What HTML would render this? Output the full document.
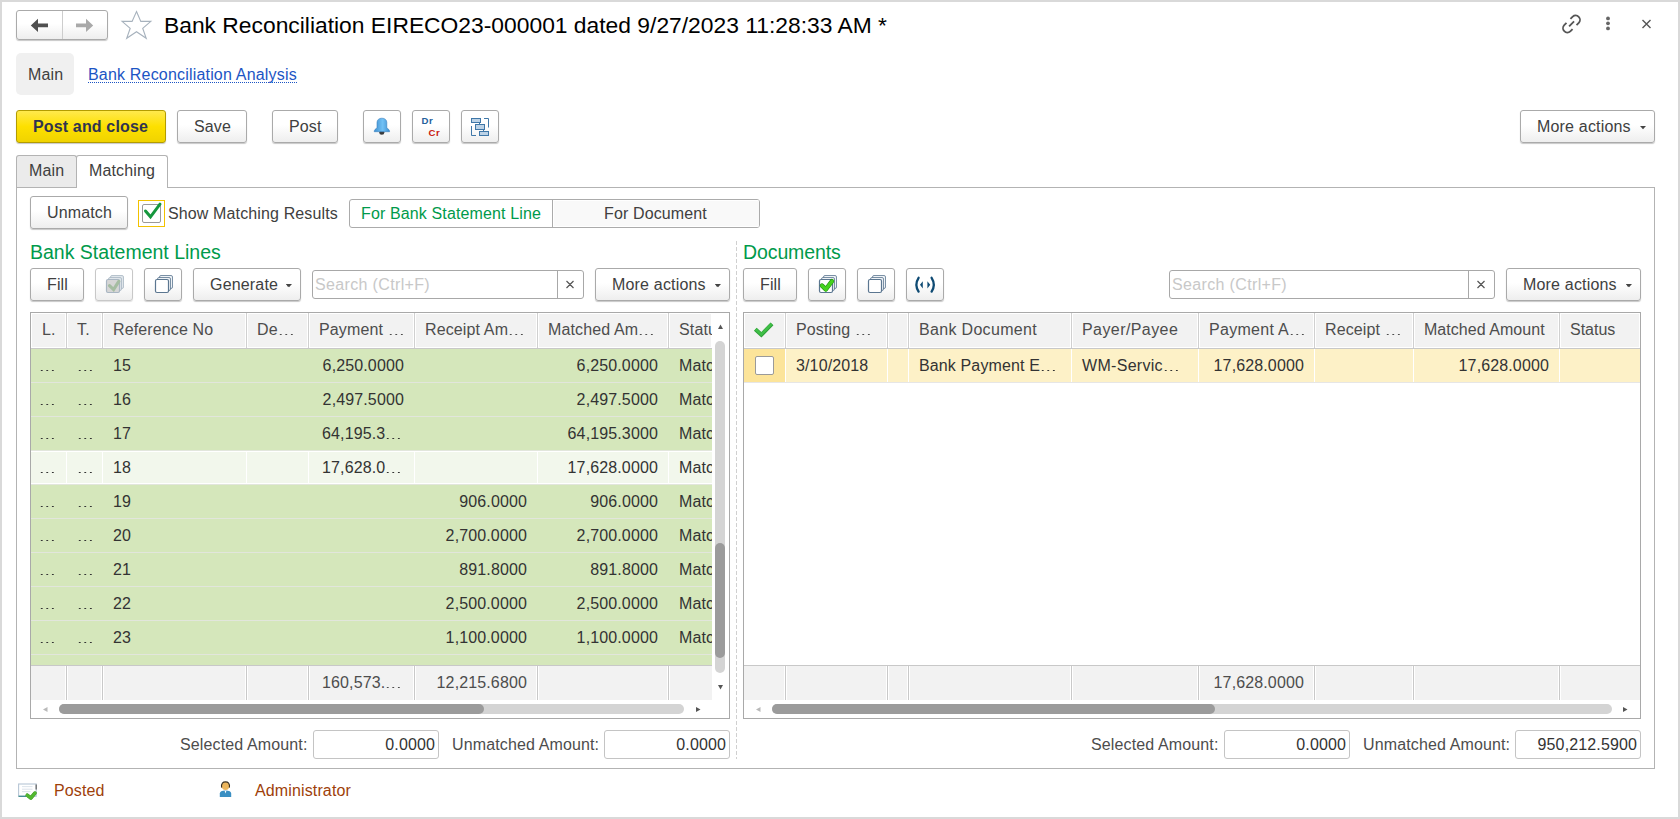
<!DOCTYPE html>
<html><head><meta charset="utf-8"><style>
*{box-sizing:border-box;margin:0;padding:0}
html,body{width:1680px;height:819px;overflow:hidden}
body{background:#d9d9d9;font-family:"Liberation Sans",sans-serif;font-size:16px;color:#404040;position:relative}
.win{position:absolute;left:2px;top:2px;width:1676px;height:815px;background:#fff}
.a{position:absolute}
.t{position:absolute;white-space:nowrap;line-height:1;letter-spacing:0.13px}
.el{display:inline-block;width:16px;height:1.4px;background:linear-gradient(90deg,currentColor 0,currentColor 2px,transparent 2px) 1.8px 0/5.55px 1.4px repeat-x}
.btn{position:absolute;border:1px solid #aaa;border-radius:3px;background:linear-gradient(#fff 0%,#fff 45%,#eeeeee 100%);box-shadow:0 1px 1px rgba(0,0,0,.22)}
.inp{position:absolute;border:1px solid #bdbdbd;border-radius:3px;background:#fff}
.tbl{position:absolute;border:1px solid #a8a8a8;background:#fff;overflow:hidden}
.hd{position:absolute;background:#f2f2f2;border:1px solid #fff}
.vl{position:absolute;width:1px;background:#cfcfcf}
</style></head><body>
<div class="win"></div>
<div class="btn" style="left:16px;top:10px;width:92px;height:30px;"></div>
<div class="a" style="left:62px;top:11px;width:1px;height:28px;background:#cdcdcd"></div>
<div class="t" style="left:164px;top:14px;font-size:22.83px;color:#000;letter-spacing:0">Bank Reconciliation EIRECO23-000001 dated 9/27/2023 11:28:33 AM *</div>
<div class="a" style="left:16px;top:53px;width:58px;height:42px;background:#f0f0f0;border-radius:5px"></div>
<div class="t" style="left:28px;top:67px;color:#404040;">Main</div>
<div class="t" style="left:88px;top:67px;color:#1c55c4;letter-spacing:0.185px">Bank Reconciliation Analysis</div>
<div class="a" style="left:88px;top:82px;width:209px;height:1px;background-image:linear-gradient(90deg,#1c55c4 50%,transparent 50%);background-size:2px 1px"></div>
<div class="btn" style="left:16px;top:110px;width:150px;height:33px;background:linear-gradient(#ffe94d,#fde000 50%,#f0d300);border-color:#b39c00"></div>
<div class="t" style="left:33px;top:119px;color:#30344f;font-weight:bold;letter-spacing:0.15px">Post and close</div>
<div class="btn" style="left:177px;top:110px;width:70px;height:33px;"></div>
<div class="t" style="left:194px;top:119px;">Save</div>
<div class="btn" style="left:272px;top:110px;width:66px;height:33px;"></div>
<div class="t" style="left:289px;top:119px;">Post</div>
<div class="btn" style="left:363px;top:110px;width:38px;height:33px;"></div>
<div class="btn" style="left:412px;top:110px;width:38px;height:33px;"></div>
<div class="btn" style="left:461px;top:110px;width:38px;height:33px;"></div>
<div class="btn" style="left:1520px;top:110px;width:135px;height:33px;"></div>
<div class="t" style="left:1537px;top:119px;letter-spacing:0.18px">More actions</div>
<div class="a" style="left:16px;top:155px;width:61px;height:33px;background:#ebebeb;border:1px solid #b3b3b3;border-bottom:none;border-radius:3px 3px 0 0"></div>
<div class="t" style="left:29px;top:163px;">Main</div>
<div class="a" style="left:76px;top:155px;width:92px;height:33px;background:#fff;border:1px solid #b3b3b3;border-bottom:none;border-radius:3px 3px 0 0"></div>
<div class="t" style="left:89px;top:163px;">Matching</div>
<div class="a" style="left:16px;top:187px;width:1639px;height:582px;border:1px solid #b3b3b3;border-top:none"></div>
<div class="a" style="left:16px;top:187px;width:60px;height:1px;background:#b3b3b3"></div>
<div class="a" style="left:167px;top:187px;width:1488px;height:1px;background:#b3b3b3"></div>
<div class="btn" style="left:30px;top:196px;width:98px;height:33px;"></div>
<div class="t" style="left:47px;top:205px;">Unmatch</div>
<div class="a" style="left:138px;top:200px;width:27px;height:27px;border:1px solid #f2c200"></div>
<div class="a" style="left:142px;top:204px;width:19px;height:19px;border:1px solid #9a9a9a;border-radius:2px;background:#fff"></div>
<div class="t" style="left:168px;top:206px;">Show Matching Results</div>
<div class="a" style="left:349px;top:199px;width:411px;height:29px;border:1px solid #ababab;border-radius:3px;background:#fff;overflow:hidden"><div style="position:absolute;left:202px;top:0;width:208px;height:27px;background:#f9f9f9;border-left:1px solid #ababab;box-shadow:inset 0 0 0 1px #fff"></div></div>
<div class="t" style="left:361px;top:206px;color:#009a4b;">For Bank Statement Line</div>
<div class="t" style="left:604px;top:206px;">For Document</div>
<div class="t" style="left:30px;top:243px;font-size:19.5px;color:#009a4b;letter-spacing:0">Bank Statement Lines</div>
<div class="t" style="left:743px;top:243px;font-size:19.5px;color:#009a4b;letter-spacing:-0.1px">Documents</div>
<div class="a" style="left:736px;top:241px;width:1px;height:518px;background-image:linear-gradient(#d0d0d0 0,#d0d0d0 4px,transparent 4px);background-size:1px 6px"></div>
<div class="btn" style="left:30px;top:268px;width:54px;height:33px;"></div>
<div class="t" style="left:47px;top:277px;">Fill</div>
<div class="btn" style="left:95px;top:268px;width:38px;height:33px;border-color:#c8c8c8;box-shadow:0 1px 1px rgba(0,0,0,.12)"></div>
<div class="btn" style="left:144px;top:268px;width:38px;height:33px;"></div>
<div class="btn" style="left:193px;top:268px;width:108px;height:33px;"></div>
<div class="t" style="left:210px;top:277px;letter-spacing:0.18px">Generate</div>
<div class="a" style="left:286px;top:284px;width:5px;height:3px;border-left:2.5px solid transparent;border-right:2.5px solid transparent;border-top:3px solid #555;width:0;height:0"></div>
<div class="a" style="left:312px;top:270px;width:272px;height:29px;border:1px solid #a8a8a8;border-radius:3px;background:#fff"></div>
<div class="a" style="left:557px;top:270px;width:1px;height:29px;background:#a8a8a8"></div>
<div class="t" style="left:315px;top:277px;color:#c8c8c8;letter-spacing:0.35px">Search (Ctrl+F)</div>
<div class="btn" style="left:595px;top:268px;width:135px;height:33px;"></div>
<div class="t" style="left:612px;top:277px;letter-spacing:0.18px">More actions</div>
<div class="a" style="left:715px;top:284px;width:5px;height:3px;border-left:2.5px solid transparent;border-right:2.5px solid transparent;border-top:3px solid #555;width:0;height:0"></div>
<div class="btn" style="left:743px;top:268px;width:54px;height:33px;"></div>
<div class="t" style="left:760px;top:277px;">Fill</div>
<div class="btn" style="left:808px;top:268px;width:38px;height:33px;"></div>
<div class="btn" style="left:857px;top:268px;width:38px;height:33px;"></div>
<div class="btn" style="left:906px;top:268px;width:38px;height:33px;"></div>
<div class="a" style="left:1169px;top:270px;width:326px;height:29px;border:1px solid #a8a8a8;border-radius:3px;background:#fff"></div>
<div class="a" style="left:1468px;top:270px;width:1px;height:29px;background:#a8a8a8"></div>
<div class="t" style="left:1172px;top:277px;color:#c8c8c8;letter-spacing:0.35px">Search (Ctrl+F)</div>
<div class="btn" style="left:1506px;top:268px;width:135px;height:33px;"></div>
<div class="t" style="left:1523px;top:277px;letter-spacing:0.18px">More actions</div>
<div class="a" style="left:1626px;top:284px;width:5px;height:3px;border-left:2.5px solid transparent;border-right:2.5px solid transparent;border-top:3px solid #555;width:0;height:0"></div>
<div class="a" style="left:30px;top:312px;width:700px;height:407px;border:1px solid #a9a9a9;background:#fff"></div>
<div class="a" style="left:31px;top:349px;width:681px;height:316px;background:#d5e7bb"></div>
<div class="a" style="left:31px;top:382px;width:681px;height:1px;background:#e2e6dc"></div>
<div class="a" style="left:31px;top:416px;width:681px;height:1px;background:#e2e6dc"></div>
<div class="a" style="left:31px;top:450px;width:681px;height:1px;background:#e2e6dc"></div>
<div class="a" style="left:31px;top:484px;width:681px;height:1px;background:#e2e6dc"></div>
<div class="a" style="left:31px;top:518px;width:681px;height:1px;background:#e2e6dc"></div>
<div class="a" style="left:31px;top:552px;width:681px;height:1px;background:#e2e6dc"></div>
<div class="a" style="left:31px;top:586px;width:681px;height:1px;background:#e2e6dc"></div>
<div class="a" style="left:31px;top:620px;width:681px;height:1px;background:#e2e6dc"></div>
<div class="a" style="left:31px;top:654px;width:681px;height:1px;background:#e2e6dc"></div>
<div class="a" style="left:31px;top:451px;width:681px;height:33px;background:#f2f7ec;border-top:1px solid #fff;border-bottom:1px solid #fff"></div>
<div class="a" style="left:66px;top:451px;width:1px;height:33px;background:#fff"></div>
<div class="a" style="left:102px;top:451px;width:1px;height:33px;background:#fff"></div>
<div class="a" style="left:246px;top:451px;width:1px;height:33px;background:#fff"></div>
<div class="a" style="left:308px;top:451px;width:1px;height:33px;background:#fff"></div>
<div class="a" style="left:414px;top:451px;width:1px;height:33px;background:#fff"></div>
<div class="a" style="left:537px;top:451px;width:1px;height:33px;background:#fff"></div>
<div class="a" style="left:668px;top:451px;width:1px;height:33px;background:#fff"></div>
<div class="a" style="left:31px;top:313px;width:681px;height:35px;background:#f2f2f2;border:1px solid #fff"></div>
<div class="a" style="left:65px;top:313px;width:1px;height:35px;background:#fff"></div>
<div class="a" style="left:66px;top:313px;width:1px;height:35px;background:#d0d0d0"></div>
<div class="a" style="left:67px;top:313px;width:1px;height:35px;background:#fff"></div>
<div class="a" style="left:101px;top:313px;width:1px;height:35px;background:#fff"></div>
<div class="a" style="left:102px;top:313px;width:1px;height:35px;background:#d0d0d0"></div>
<div class="a" style="left:103px;top:313px;width:1px;height:35px;background:#fff"></div>
<div class="a" style="left:245px;top:313px;width:1px;height:35px;background:#fff"></div>
<div class="a" style="left:246px;top:313px;width:1px;height:35px;background:#d0d0d0"></div>
<div class="a" style="left:247px;top:313px;width:1px;height:35px;background:#fff"></div>
<div class="a" style="left:307px;top:313px;width:1px;height:35px;background:#fff"></div>
<div class="a" style="left:308px;top:313px;width:1px;height:35px;background:#d0d0d0"></div>
<div class="a" style="left:309px;top:313px;width:1px;height:35px;background:#fff"></div>
<div class="a" style="left:413px;top:313px;width:1px;height:35px;background:#fff"></div>
<div class="a" style="left:414px;top:313px;width:1px;height:35px;background:#d0d0d0"></div>
<div class="a" style="left:415px;top:313px;width:1px;height:35px;background:#fff"></div>
<div class="a" style="left:536px;top:313px;width:1px;height:35px;background:#fff"></div>
<div class="a" style="left:537px;top:313px;width:1px;height:35px;background:#d0d0d0"></div>
<div class="a" style="left:538px;top:313px;width:1px;height:35px;background:#fff"></div>
<div class="a" style="left:667px;top:313px;width:1px;height:35px;background:#fff"></div>
<div class="a" style="left:668px;top:313px;width:1px;height:35px;background:#d0d0d0"></div>
<div class="a" style="left:669px;top:313px;width:1px;height:35px;background:#fff"></div>
<div class="a" style="left:31px;top:348px;width:681px;height:1px;background:#c8c8c8"></div>
<div class="a" style="left:31px;top:665px;width:681px;height:1px;background:#c8c8c8"></div>
<div class="a" style="left:31px;top:666px;width:681px;height:34px;background:#f2f2f2"></div>
<div class="a" style="left:65px;top:666px;width:3px;height:34px;background:#fff"></div>
<div class="a" style="left:66px;top:666px;width:1px;height:35px;background:#c9c9c9"></div>
<div class="a" style="left:101px;top:666px;width:3px;height:34px;background:#fff"></div>
<div class="a" style="left:102px;top:666px;width:1px;height:35px;background:#c9c9c9"></div>
<div class="a" style="left:245px;top:666px;width:3px;height:34px;background:#fff"></div>
<div class="a" style="left:246px;top:666px;width:1px;height:35px;background:#c9c9c9"></div>
<div class="a" style="left:307px;top:666px;width:3px;height:34px;background:#fff"></div>
<div class="a" style="left:308px;top:666px;width:1px;height:35px;background:#c9c9c9"></div>
<div class="a" style="left:413px;top:666px;width:3px;height:34px;background:#fff"></div>
<div class="a" style="left:414px;top:666px;width:1px;height:35px;background:#c9c9c9"></div>
<div class="a" style="left:536px;top:666px;width:3px;height:34px;background:#fff"></div>
<div class="a" style="left:537px;top:666px;width:1px;height:35px;background:#c9c9c9"></div>
<div class="a" style="left:667px;top:666px;width:3px;height:34px;background:#fff"></div>
<div class="a" style="left:668px;top:666px;width:1px;height:35px;background:#c9c9c9"></div>
<div class="t" style="left:42px;top:322px;color:#4d4d4d;">L.</div>
<div class="t" style="left:77px;top:322px;color:#4d4d4d;">T.</div>
<div class="t" style="left:113px;top:322px;color:#4d4d4d;">Reference No</div>
<div class="t" style="left:257px;top:322px;color:#4d4d4d;">De<span class="el"></span></div>
<div class="t" style="left:319px;top:322px;color:#4d4d4d;">Payment <span class="el"></span></div>
<div class="t" style="left:425px;top:322px;color:#4d4d4d;">Receipt Am<span class="el"></span></div>
<div class="t" style="left:548px;top:322px;color:#4d4d4d;">Matched Am<span class="el"></span></div>
<div class="t" style="left:679px;top:322px;color:#4d4d4d;width:33px;overflow:hidden">Statu</div>
<div class="t" style="left:39px;top:358px;color:#333;"><span class="el"></span></div>
<div class="t" style="left:77px;top:358px;color:#333;"><span class="el"></span></div>
<div class="t" style="left:113px;top:358px;color:#333;">15</div>
<div class="t" style="left:308px;top:358px;color:#333;width:96px;text-align:right">6,250.0000</div>
<div class="t" style="left:537px;top:358px;color:#333;width:121px;text-align:right">6,250.0000</div>
<div class="t" style="left:679px;top:358px;color:#333;width:33px;overflow:hidden">Match</div>
<div class="t" style="left:39px;top:392px;color:#333;"><span class="el"></span></div>
<div class="t" style="left:77px;top:392px;color:#333;"><span class="el"></span></div>
<div class="t" style="left:113px;top:392px;color:#333;">16</div>
<div class="t" style="left:308px;top:392px;color:#333;width:96px;text-align:right">2,497.5000</div>
<div class="t" style="left:537px;top:392px;color:#333;width:121px;text-align:right">2,497.5000</div>
<div class="t" style="left:679px;top:392px;color:#333;width:33px;overflow:hidden">Match</div>
<div class="t" style="left:39px;top:426px;color:#333;"><span class="el"></span></div>
<div class="t" style="left:77px;top:426px;color:#333;"><span class="el"></span></div>
<div class="t" style="left:113px;top:426px;color:#333;">17</div>
<div class="t" style="left:322px;top:426px;color:#333;">64,195.3<span class="el"></span></div>
<div class="t" style="left:537px;top:426px;color:#333;width:121px;text-align:right">64,195.3000</div>
<div class="t" style="left:679px;top:426px;color:#333;width:33px;overflow:hidden">Match</div>
<div class="t" style="left:39px;top:460px;color:#333;"><span class="el"></span></div>
<div class="t" style="left:77px;top:460px;color:#333;"><span class="el"></span></div>
<div class="t" style="left:113px;top:460px;color:#333;">18</div>
<div class="t" style="left:322px;top:460px;color:#333;">17,628.0<span class="el"></span></div>
<div class="t" style="left:537px;top:460px;color:#333;width:121px;text-align:right">17,628.0000</div>
<div class="t" style="left:679px;top:460px;color:#333;width:33px;overflow:hidden">Match</div>
<div class="t" style="left:39px;top:494px;color:#333;"><span class="el"></span></div>
<div class="t" style="left:77px;top:494px;color:#333;"><span class="el"></span></div>
<div class="t" style="left:113px;top:494px;color:#333;">19</div>
<div class="t" style="left:414px;top:494px;color:#333;width:113px;text-align:right">906.0000</div>
<div class="t" style="left:537px;top:494px;color:#333;width:121px;text-align:right">906.0000</div>
<div class="t" style="left:679px;top:494px;color:#333;width:33px;overflow:hidden">Match</div>
<div class="t" style="left:39px;top:528px;color:#333;"><span class="el"></span></div>
<div class="t" style="left:77px;top:528px;color:#333;"><span class="el"></span></div>
<div class="t" style="left:113px;top:528px;color:#333;">20</div>
<div class="t" style="left:414px;top:528px;color:#333;width:113px;text-align:right">2,700.0000</div>
<div class="t" style="left:537px;top:528px;color:#333;width:121px;text-align:right">2,700.0000</div>
<div class="t" style="left:679px;top:528px;color:#333;width:33px;overflow:hidden">Match</div>
<div class="t" style="left:39px;top:562px;color:#333;"><span class="el"></span></div>
<div class="t" style="left:77px;top:562px;color:#333;"><span class="el"></span></div>
<div class="t" style="left:113px;top:562px;color:#333;">21</div>
<div class="t" style="left:414px;top:562px;color:#333;width:113px;text-align:right">891.8000</div>
<div class="t" style="left:537px;top:562px;color:#333;width:121px;text-align:right">891.8000</div>
<div class="t" style="left:679px;top:562px;color:#333;width:33px;overflow:hidden">Match</div>
<div class="t" style="left:39px;top:596px;color:#333;"><span class="el"></span></div>
<div class="t" style="left:77px;top:596px;color:#333;"><span class="el"></span></div>
<div class="t" style="left:113px;top:596px;color:#333;">22</div>
<div class="t" style="left:414px;top:596px;color:#333;width:113px;text-align:right">2,500.0000</div>
<div class="t" style="left:537px;top:596px;color:#333;width:121px;text-align:right">2,500.0000</div>
<div class="t" style="left:679px;top:596px;color:#333;width:33px;overflow:hidden">Match</div>
<div class="t" style="left:39px;top:630px;color:#333;"><span class="el"></span></div>
<div class="t" style="left:77px;top:630px;color:#333;"><span class="el"></span></div>
<div class="t" style="left:113px;top:630px;color:#333;">23</div>
<div class="t" style="left:414px;top:630px;color:#333;width:113px;text-align:right">1,100.0000</div>
<div class="t" style="left:537px;top:630px;color:#333;width:121px;text-align:right">1,100.0000</div>
<div class="t" style="left:679px;top:630px;color:#333;width:33px;overflow:hidden">Match</div>
<div class="t" style="left:322px;top:675px;color:#4d4d4d;">160,573.<span class="el"></span></div>
<div class="t" style="left:414px;top:675px;color:#4d4d4d;width:113px;text-align:right">12,215.6800</div>
<div class="a" style="left:712px;top:313px;width:17px;height:405px;background:#fff"></div>
<div class="a" style="left:715px;top:341px;width:10px;height:332px;background:#d4d4d4;border-radius:5px"></div>
<div class="a" style="left:715px;top:543px;width:10px;height:115px;background:#9b9b9b;border-radius:5px"></div>
<div class="a" style="left:31px;top:700px;width:681px;height:18px;background:#fff"></div>
<div class="a" style="left:59px;top:704px;width:625px;height:10px;background:#d4d4d4;border-radius:5px"></div>
<div class="a" style="left:59px;top:704px;width:425px;height:10px;background:#9b9b9b;border-radius:5px"></div>
<div class="a" style="left:743px;top:312px;width:898px;height:407px;border:1px solid #a9a9a9;background:#fff"></div>
<div class="a" style="left:744px;top:313px;width:896px;height:35px;background:#f2f2f2;border:1px solid #fff"></div>
<div class="a" style="left:784px;top:313px;width:1px;height:35px;background:#fff"></div>
<div class="a" style="left:785px;top:313px;width:1px;height:35px;background:#d0d0d0"></div>
<div class="a" style="left:786px;top:313px;width:1px;height:35px;background:#fff"></div>
<div class="a" style="left:886px;top:313px;width:1px;height:35px;background:#fff"></div>
<div class="a" style="left:887px;top:313px;width:1px;height:35px;background:#d0d0d0"></div>
<div class="a" style="left:888px;top:313px;width:1px;height:35px;background:#fff"></div>
<div class="a" style="left:907px;top:313px;width:1px;height:35px;background:#fff"></div>
<div class="a" style="left:908px;top:313px;width:1px;height:35px;background:#d0d0d0"></div>
<div class="a" style="left:909px;top:313px;width:1px;height:35px;background:#fff"></div>
<div class="a" style="left:1070px;top:313px;width:1px;height:35px;background:#fff"></div>
<div class="a" style="left:1071px;top:313px;width:1px;height:35px;background:#d0d0d0"></div>
<div class="a" style="left:1072px;top:313px;width:1px;height:35px;background:#fff"></div>
<div class="a" style="left:1197px;top:313px;width:1px;height:35px;background:#fff"></div>
<div class="a" style="left:1198px;top:313px;width:1px;height:35px;background:#d0d0d0"></div>
<div class="a" style="left:1199px;top:313px;width:1px;height:35px;background:#fff"></div>
<div class="a" style="left:1313px;top:313px;width:1px;height:35px;background:#fff"></div>
<div class="a" style="left:1314px;top:313px;width:1px;height:35px;background:#d0d0d0"></div>
<div class="a" style="left:1315px;top:313px;width:1px;height:35px;background:#fff"></div>
<div class="a" style="left:1412px;top:313px;width:1px;height:35px;background:#fff"></div>
<div class="a" style="left:1413px;top:313px;width:1px;height:35px;background:#d0d0d0"></div>
<div class="a" style="left:1414px;top:313px;width:1px;height:35px;background:#fff"></div>
<div class="a" style="left:1558px;top:313px;width:1px;height:35px;background:#fff"></div>
<div class="a" style="left:1559px;top:313px;width:1px;height:35px;background:#d0d0d0"></div>
<div class="a" style="left:1560px;top:313px;width:1px;height:35px;background:#fff"></div>
<div class="a" style="left:744px;top:348px;width:896px;height:1px;background:#c8c8c8"></div>
<div class="a" style="left:744px;top:349px;width:896px;height:33px;background:#fdf1c7"></div>
<div class="a" style="left:744px;top:349px;width:41px;height:33px;background:#fce49a"></div>
<div class="a" style="left:785px;top:349px;width:1px;height:33px;background:#fff"></div>
<div class="a" style="left:887px;top:349px;width:1px;height:33px;background:#fff"></div>
<div class="a" style="left:908px;top:349px;width:1px;height:33px;background:#fff"></div>
<div class="a" style="left:1071px;top:349px;width:1px;height:33px;background:#fff"></div>
<div class="a" style="left:1198px;top:349px;width:1px;height:33px;background:#fff"></div>
<div class="a" style="left:1314px;top:349px;width:1px;height:33px;background:#fff"></div>
<div class="a" style="left:1413px;top:349px;width:1px;height:33px;background:#fff"></div>
<div class="a" style="left:1559px;top:349px;width:1px;height:33px;background:#fff"></div>
<div class="a" style="left:744px;top:382px;width:896px;height:1px;background:#e6e6e6"></div>
<div class="a" style="left:744px;top:665px;width:896px;height:1px;background:#c8c8c8"></div>
<div class="a" style="left:744px;top:666px;width:896px;height:34px;background:#f2f2f2"></div>
<div class="a" style="left:784px;top:666px;width:3px;height:34px;background:#fff"></div>
<div class="a" style="left:785px;top:666px;width:1px;height:35px;background:#c9c9c9"></div>
<div class="a" style="left:886px;top:666px;width:3px;height:34px;background:#fff"></div>
<div class="a" style="left:887px;top:666px;width:1px;height:35px;background:#c9c9c9"></div>
<div class="a" style="left:907px;top:666px;width:3px;height:34px;background:#fff"></div>
<div class="a" style="left:908px;top:666px;width:1px;height:35px;background:#c9c9c9"></div>
<div class="a" style="left:1070px;top:666px;width:3px;height:34px;background:#fff"></div>
<div class="a" style="left:1071px;top:666px;width:1px;height:35px;background:#c9c9c9"></div>
<div class="a" style="left:1197px;top:666px;width:3px;height:34px;background:#fff"></div>
<div class="a" style="left:1198px;top:666px;width:1px;height:35px;background:#c9c9c9"></div>
<div class="a" style="left:1313px;top:666px;width:3px;height:34px;background:#fff"></div>
<div class="a" style="left:1314px;top:666px;width:1px;height:35px;background:#c9c9c9"></div>
<div class="a" style="left:1412px;top:666px;width:3px;height:34px;background:#fff"></div>
<div class="a" style="left:1413px;top:666px;width:1px;height:35px;background:#c9c9c9"></div>
<div class="a" style="left:1558px;top:666px;width:3px;height:34px;background:#fff"></div>
<div class="a" style="left:1559px;top:666px;width:1px;height:35px;background:#c9c9c9"></div>
<div class="t" style="left:796px;top:322px;color:#4d4d4d;letter-spacing:0.13px">Posting <span class="el"></span></div>
<div class="t" style="left:919px;top:322px;color:#4d4d4d;letter-spacing:0.32px">Bank Document</div>
<div class="t" style="left:1082px;top:322px;color:#4d4d4d;letter-spacing:0.42px">Payer/Payee</div>
<div class="t" style="left:1209px;top:322px;color:#4d4d4d;letter-spacing:0.3px">Payment A<span class="el"></span></div>
<div class="t" style="left:1325px;top:322px;color:#4d4d4d;letter-spacing:0.13px">Receipt <span class="el"></span></div>
<div class="t" style="left:1424px;top:322px;color:#4d4d4d;letter-spacing:0.04px">Matched Amount</div>
<div class="t" style="left:1570px;top:322px;color:#4d4d4d;letter-spacing:0px">Status</div>
<div class="t" style="left:796px;top:358px;color:#333;">3/10/2018</div>
<div class="t" style="left:919px;top:358px;color:#333;">Bank Payment E<span class="el"></span></div>
<div class="t" style="left:1082px;top:358px;color:#333;letter-spacing:0.3px">WM-Servic<span class="el"></span></div>
<div class="t" style="left:1198px;top:358px;color:#333;width:106px;text-align:right">17,628.0000</div>
<div class="t" style="left:1413px;top:358px;color:#333;width:136px;text-align:right">17,628.0000</div>
<div class="t" style="left:1198px;top:675px;color:#4d4d4d;width:106px;text-align:right">17,628.0000</div>
<div class="a" style="left:755px;top:356px;width:19px;height:19px;border:1px solid #9a9a9a;border-radius:2px;background:#fff"></div>
<div class="a" style="left:744px;top:700px;width:896px;height:18px;background:#fff"></div>
<div class="a" style="left:772px;top:704px;width:840px;height:10px;background:#d4d4d4;border-radius:5px"></div>
<div class="a" style="left:772px;top:704px;width:443px;height:10px;background:#9b9b9b;border-radius:5px"></div>
<div class="t" style="left:180px;top:737px;color:#4d4d4d;">Selected Amount:</div>
<div class="a" style="left:313px;top:730px;width:126px;height:29px;border:1px solid #c4c4c4;border-radius:3px;background:#fff"></div>
<div class="t" style="left:313px;top:737px;color:#333;width:122px;text-align:right">0.0000</div>
<div class="t" style="left:452px;top:737px;color:#4d4d4d;">Unmatched Amount:</div>
<div class="a" style="left:604px;top:730px;width:126px;height:29px;border:1px solid #c4c4c4;border-radius:3px;background:#fff"></div>
<div class="t" style="left:604px;top:737px;color:#333;width:122px;text-align:right">0.0000</div>
<div class="t" style="left:1091px;top:737px;color:#4d4d4d;">Selected Amount:</div>
<div class="a" style="left:1224px;top:730px;width:126px;height:29px;border:1px solid #c4c4c4;border-radius:3px;background:#fff"></div>
<div class="t" style="left:1224px;top:737px;color:#333;width:122px;text-align:right">0.0000</div>
<div class="t" style="left:1363px;top:737px;color:#4d4d4d;">Unmatched Amount:</div>
<div class="a" style="left:1515px;top:730px;width:126px;height:29px;border:1px solid #c4c4c4;border-radius:3px;background:#fff"></div>
<div class="t" style="left:1515px;top:737px;color:#333;width:122px;text-align:right">950,212.5900</div>
<div class="t" style="left:54px;top:783px;color:#9e3f0a;">Posted</div>
<div class="t" style="left:255px;top:783px;color:#9e3f0a;">Administrator</div>
<svg class="a" style="left:0;top:0" width="1680" height="819"><path d="M30.8,25.4 L38,18.8 L38,23.6 L48,23.6 L48,27.2 L38,27.2 L38,32 Z" fill="#505050"/><path d="M93.2,25.4 L86,18.8 L86,23.6 L76,23.6 L76,27.2 L86,27.2 L86,32 Z" fill="#a9a9a9"/><path d="M136.5,11.5 L140.8,21.4 L150.8,21.4 L142.7,28.3 L146.2,38.3 L136.5,31.7 L126.7,38.3 L130.2,28.3 L122.1,21.4 L132.1,21.4 Z" fill="none" stroke="#a7b2bd" stroke-width="1.1" stroke-linejoin="miter"/><g fill="none" stroke="#555" stroke-width="1.8" stroke-linecap="butt"><path d="M1570.44,18.98 L1572.7,16.72 A4.3,4.3 0 0 1 1578.78,22.8 L1576.52,25.06"/><path d="M1572.56,29.02 L1570.3,31.28 A4.3,4.3 0 0 1 1564.22,25.2 L1566.48,22.94"/><path d="M1569.1,26.4 L1574.05,21.45"/></g><circle cx="1608" cy="18.4" r="1.9" fill="#666"/><circle cx="1608" cy="23.3" r="1.9" fill="#666"/><circle cx="1608" cy="28.4" r="1.9" fill="#666"/><path d="M1642.5,20 L1650.5,28 M1650.5,20 L1642.5,28" stroke="#555" stroke-width="1.4"/><defs><linearGradient id="bg" x1="0" x2="1"><stop offset="0" stop-color="#3f90d0"/><stop offset=".55" stop-color="#72c1f5"/><stop offset="1" stop-color="#3f90d0"/></linearGradient></defs><ellipse cx="381.8" cy="132.6" rx="2.6" ry="2.2" fill="#3a3a3a"/><path d="M377,128 L377,122.5 C377,119.8 379,118.2 381.9,118.2 C384.8,118.2 386.8,119.8 386.8,122.5 L386.8,128 C388.5,129 389.6,130 389.6,131.7 L374.2,131.7 C374.2,130 375.3,129 377,128 Z" fill="url(#bg)" stroke="#3b82c0" stroke-width="0.6"/><text x="421.4" y="124" font-family="Liberation Sans" font-weight="bold" font-size="9.6" fill="#23619b" letter-spacing="0.6">Dr</text><text x="428.4" y="136" font-family="Liberation Sans" font-weight="bold" font-size="9.6" fill="#c81a10" letter-spacing="0.6">Cr</text><g stroke="#3f77a8" stroke-width="1" fill="#bcd2e6"><rect x="471.5" y="118.5" width="9" height="4"/><rect x="475.5" y="124.5" width="9" height="5"/><rect x="479.5" y="131.5" width="9" height="4"/><path d="M479.5,123 L479.5,124 M483.5,130 L483.5,131" fill="none"/><path d="M484,118.5 L488.5,118.5 L488.5,127.5 M471.5,126 L471.5,135.5 L476,135.5" fill="none"/></g><path d="M1640,126 L1646,126 L1643,129.2 Z" fill="#444"/><path d="M286,284 L292,284 L289,287.2 Z" fill="#444"/><path d="M715,284 L721,284 L718,287.2 Z" fill="#444"/><path d="M1626,284 L1632,284 L1629,287.2 Z" fill="#444"/><path d="M145.5,211 L150.5,216.8 L160,204.2" fill="none" stroke="#15973d" stroke-width="3" stroke-linecap="round" stroke-linejoin="miter"/><rect x="110.5" y="275.5" width="13" height="13" rx="1.5" fill="#dfe5ea" stroke="#a9b6c3" stroke-width="1" stroke-opacity=".8"/><rect x="108.5" y="277.5" width="13" height="13" rx="1.5" fill="#dfe5ea" stroke="#a9b6c3" stroke-width="1" stroke-opacity=".8"/><rect x="106.5" y="279.5" width="13" height="13" rx="1.5" fill="#d6d6d6" stroke="#a9b6c3" stroke-width="1.2"/><path d="M109.5,285.6 L113.6,289.6 L118.8,281.4" fill="none" stroke="#a5bda2" stroke-width="3.2" stroke-linecap="round" stroke-linejoin="miter"/><rect x="159.5" y="275.5" width="13" height="13" rx="1.5" fill="#eef2f6" stroke="#5b7690" stroke-width="1" stroke-opacity=".8"/><rect x="157.5" y="277.5" width="13" height="13" rx="1.5" fill="#eef2f6" stroke="#5b7690" stroke-width="1" stroke-opacity=".8"/><rect x="155.5" y="279.5" width="13" height="13" rx="1.5" fill="#fff" stroke="#5b7690" stroke-width="1.2"/><rect x="823.5" y="275.5" width="13" height="13" rx="1.5" fill="#eef2f6" stroke="#5b7690" stroke-width="1" stroke-opacity=".8"/><rect x="821.5" y="277.5" width="13" height="13" rx="1.5" fill="#eef2f6" stroke="#5b7690" stroke-width="1" stroke-opacity=".8"/><rect x="819.5" y="279.5" width="13" height="13" rx="1.5" fill="#fff" stroke="#5b7690" stroke-width="1.2"/><path d="M822,285.6 L825.8,289.4 L832,281.2" fill="none" stroke="#1f8a14" stroke-width="4.4" stroke-linecap="round" stroke-linejoin="round"/><path d="M822,285.6 L825.8,289.4 L832,281.2" fill="none" stroke="#45d21f" stroke-width="3.4" stroke-linecap="round" stroke-linejoin="miter"/><rect x="872.5" y="275.5" width="13" height="13" rx="1.5" fill="#eef2f6" stroke="#5b7690" stroke-width="1" stroke-opacity=".8"/><rect x="870.5" y="277.5" width="13" height="13" rx="1.5" fill="#eef2f6" stroke="#5b7690" stroke-width="1" stroke-opacity=".8"/><rect x="868.5" y="279.5" width="13" height="13" rx="1.5" fill="#fff" stroke="#5b7690" stroke-width="1.2"/><g fill="none" stroke="#0e4a73" stroke-width="2.3" stroke-linecap="round"><path d="M918.6,277.8 Q914.2,284.7 918.6,291.6"/><path d="M931.6,277.8 Q936,284.7 931.6,291.6"/></g><path d="M920,284.8 L922.8,281.2 L922.8,288.4 Z M930.2,284.8 L927.4,281.2 L927.4,288.4 Z" fill="#0e4a73"/><path d="M566.5,281 L573.5,288 M573.5,281 L566.5,288 M1477.5,281 L1484.5,288 M1484.5,281 L1477.5,288" stroke="#555" stroke-width="1.2"/><path d="M718,329 L723,329 L720.5,324.6 Z" fill="#555"/><path d="M718,685 L723,685 L720.5,689.4 Z" fill="#555"/><path d="M696,707 L696,712 L700.5,709.5 Z" fill="#555"/><path d="M47.5,707 L47.5,712 L43,709.5 Z" fill="#b9b9b9"/><path d="M1623,707 L1623,712 L1627.5,709.5 Z" fill="#555"/><path d="M760.5,707 L760.5,712 L756,709.5 Z" fill="#b9b9b9"/><path d="M755.3,329.3 L761.3,334.8 L772,323.9" fill="none" stroke="#2e9e36" stroke-width="4" stroke-linecap="butt"/><path d="M755.6,329.3 L761.3,334.4 L771.6,323.9" fill="none" stroke="#3fbf47" stroke-width="2.6" stroke-linecap="butt"/><rect x="18.6" y="784" width="17.6" height="12.3" fill="#fff" stroke="#b7c6d6" stroke-width="1.1"/><path d="M18.6,796.3 L26,796.3" stroke="#3e8c8f" stroke-width="1.3"/><path d="M36.2,784.6 L36.2,789.6" stroke="#6b6b6b" stroke-width="1.3"/><path d="M22,786.6 L32.5,786.6 M22,789.2 L32.5,789.2 M22,791.6 L30.5,791.6" stroke="#d8e0e8" stroke-width="0.9"/><path d="M27.2,795.2 L30.8,798.0 L35.0,793.0" fill="none" stroke="#3b8f22" stroke-width="3.5" stroke-linecap="round" stroke-linejoin="round"/><path d="M27.2,795.2 L30.8,798.0 L35.0,793.0" fill="none" stroke="#52b830" stroke-width="3.0" stroke-linecap="round" stroke-linejoin="miter"/><path d="M219.8,797 L219.8,793.5 C219.8,791.6 221.8,790.6 225.5,790.6 C229.2,790.6 231.2,791.6 231.2,793.5 L231.2,797 Z" fill="#3a8fc3"/><path d="M224.6,790.8 L225.5,793.6 L226.4,790.8 Z" fill="#fff"/><ellipse cx="225.5" cy="786" rx="3.7" ry="4.1" fill="#ecb65d"/><path d="M221.6,787.6 C221,783.4 223,781.9 225.5,781.9 C228,781.9 230,783.4 229.4,787.6" fill="none" stroke="#3a3020" stroke-width="1.1"/></svg>
</body></html>
